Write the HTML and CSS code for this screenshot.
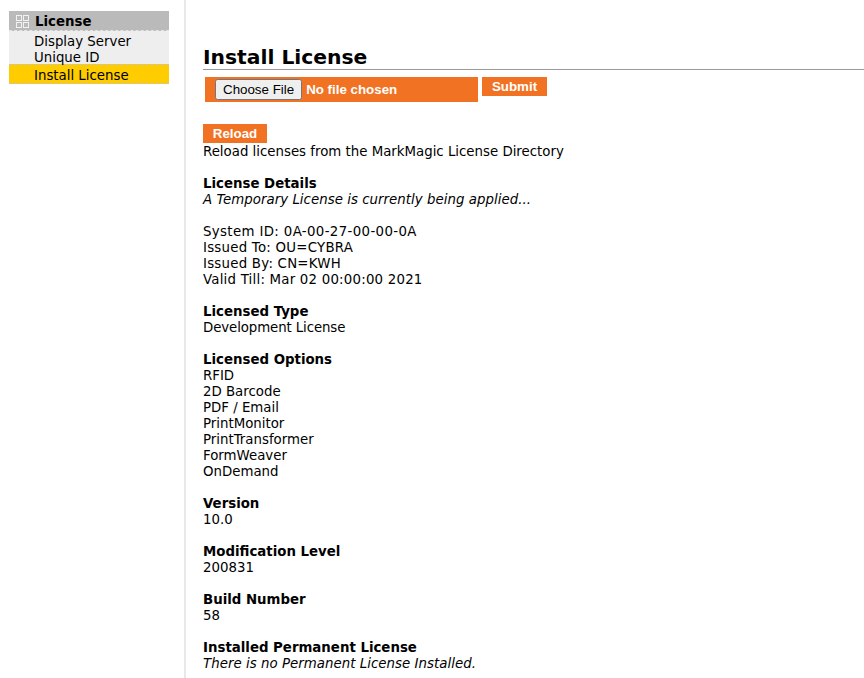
FILE: index.html
```html
<!DOCTYPE html>
<html lang="en">
<head>
<meta charset="utf-8">
<title>Install License</title>
<link rel="stylesheet" href="styles.css">
</head>
<body>
<div class="page">
  <nav class="sidebar">
    <div class="menu">
      <div class="menu-head">
        <svg class="menu-icon" width="13" height="13" viewBox="0 0 13 13" aria-hidden="true">
          <g fill="none" stroke="#f2f2f2" stroke-width="1">
            <rect x="0.5" y="0.5" width="5" height="5"/>
            <rect x="7.5" y="0.5" width="5" height="5"/>
            <rect x="0.5" y="7.5" width="5" height="5"/>
            <rect x="7.5" y="7.5" width="5" height="5"/>
          </g>
        </svg>
        <span>License</span>
      </div>
      <div class="menu-group">
        <a class="menu-item">Display Server</a>
        <a class="menu-item">Unique ID</a>
      </div>
      <a class="menu-item active">Install License</a>
    </div>
  </nav>
  <main class="content">
    <h1 class="title">Install License</h1>
    <form class="upload">
      <div class="file-box"><input class="file-input" type="file"></div>
      <button class="btn submit" type="button">Submit</button>
    </form>
    <button class="btn reload" type="button">Reload</button>
    <p class="block">Reload licenses from the MarkMagic License Directory</p>
    <p class="block"><b>License Details</b><br><i class="note">A Temporary License is currently being applied...</i></p>
    <p class="block"><span class="sp-id">System ID: 0A-00-27-00-00-0A</span><br><span class="sp-mid">Issued To: OU=CYBRA</span><br><span class="sp-mid">Issued By: CN=KWH</span><br><span class="sp-low">Valid Till: Mar 02 00:00:00 2021</span></p>
    <p class="block"><b>Licensed Type</b><br><span class="sp-neg">Development License</span></p>
    <p class="block"><b>Licensed Options</b><br>RFID<br>2D Barcode<br>PDF / Email<br>PrintMonitor<br>PrintTransformer<br>FormWeaver<br>OnDemand</p>
    <p class="block"><b>Version</b><br>10.0</p>
    <p class="block"><b>Modification Level</b><br>200831</p>
    <p class="block"><b>Build Number</b><br>58</p>
    <p class="block"><b>Installed Permanent License</b><br><i class="note">There is no Permanent License Installed.</i></p>
  </main>
</div>
</body>
</html>
```
FILE: styles.css
```css
html, body {
  margin: 0;
  padding: 0;
  height: 100%;
  overflow: hidden;
  background: #fff;
}
body {
  font-family: "DejaVu Sans", Verdana, sans-serif;
  font-size: 13.33px;
  line-height: 16px;
  color: #000;
}
.page {
  display: flex;
  height: 678px;
}
.sidebar {
  box-sizing: border-box;
  flex: none;
  width: 186px;
  padding: 11px 15px 0 9px;
  border-right: 2px solid #e8e8e8;
}
.menu-head {
  display: flex;
  align-items: center;
  gap: 6px;
  height: 17px;
  padding: 2px 0 0 7px;
  background: #bababa;
  font-weight: bold;
  border-bottom: 1px dashed #e4e4e4;
}
.menu-group {
  background: #eee;
  height: 30px;
  padding: 3px 0 0;
}
.menu-item {
  display: block;
  padding-left: 25px;
}
.menu-item.active {
  background: #ffcc00;
  border-top: 1px dashed #c4c4c4;
  border-bottom: 1px dashed #c4c4c4;
  height: 18px;
  line-height: 22px;
}
.content {
  flex: 1;
  padding: 46px 0 0 17px;
  min-width: 0;
}
.title {
  margin: 0;
  font-size: 20.3px;
  line-height: 22px;
  font-weight: bold;
  border-bottom: 1px solid #999;
  height: 23px;
}
.upload {
  display: flex;
  align-items: flex-start;
  gap: 4px;
  margin: 7px 0 0 2px;
}
.file-box {
  width: 273px;
  height: 25px;
  background: #f07222;
  padding: 2px 0 0 10px;
  box-sizing: border-box;
}
.file-input {
  font-family: "Liberation Sans", Arial, sans-serif;
  font-size: 13.33px;
  font-weight: bold;
  color: #fff;
}
.file-input::file-selector-button {
  font-family: "Liberation Sans", Arial, sans-serif;
  font-size: 13.33px;
  font-weight: normal;
  margin-right: 4px;
}
.btn {
  display: block;
  border: 0;
  margin: 0;
  padding: 0;
  background: #f07222;
  color: #fff;
  font-family: "Liberation Sans", Arial, sans-serif;
  font-size: 13.33px;
  font-weight: bold;
  text-align: center;
}
.submit {
  width: 65px;
  height: 19px;
}
.reload {
  width: 64px;
  height: 19px;
  margin: 22px 0 1px;
}
.block {
  margin: 0 0 16px;
}
.note {
  letter-spacing: 0.04px;
}
.sp-id {
  letter-spacing: 0.36px;
}
.sp-mid {
  letter-spacing: 0.24px;
}
.sp-low {
  letter-spacing: 0.22px;
}
.sp-neg {
  letter-spacing: -0.1px;
}
```
